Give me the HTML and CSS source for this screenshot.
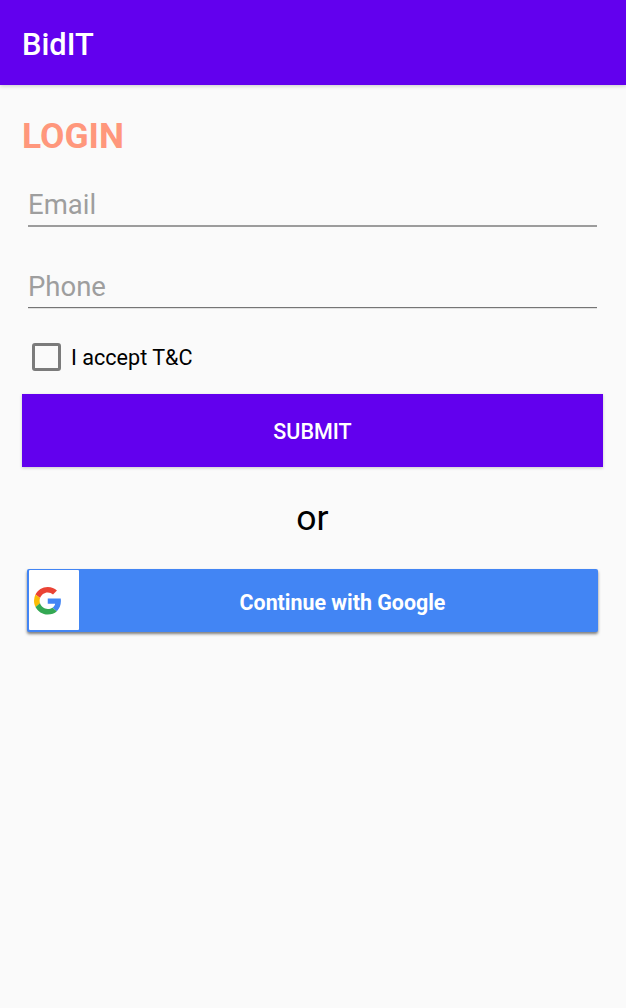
FILE: index.html
```html
<!DOCTYPE html>
<html lang="en">
<head>
<meta charset="utf-8">
<title>BidIT</title>
<link rel="stylesheet" href="styles.css">
</head>
<body>
<header class="app-bar"><h1 class="app-title">BidIT</h1></header>
<main class="login">
  <h2 class="heading">LOGIN</h2>
  <input class="field" type="email" placeholder="Email" aria-label="Email">
  <input class="field field-phone" type="tel" placeholder="Phone" aria-label="Phone">
  <label class="terms"><input class="checkbox" type="checkbox"><span class="terms-text">I accept T&amp;C</span></label>
  <button class="submit"><span class="submit-text">SUBMIT</span></button>
  <p class="or"><span class="or-text">or</span></p>
  <button class="google">
    <span class="google-icon">
      <svg width="27.5" height="27.5" viewBox="0 0 48 48"><path fill="#ea4335" d="M24 9.5c3.54 0 6.71 1.22 9.21 3.6l6.85-6.85C35.9 2.38 30.47 0 24 0 14.62 0 6.51 5.38 2.56 13.22l7.98 6.19C12.43 13.72 17.74 9.5 24 9.5z"/><path fill="#4285f4" d="M46.98 24.55c0-1.57-.15-3.09-.38-4.55H24v9.02h12.94c-.58 2.96-2.26 5.48-4.78 7.18l7.73 6c4.51-4.18 7.09-10.36 7.09-17.65z"/><path fill="#fbbc05" d="M10.53 28.59A14.5 14.5 0 0 1 9.77 24c0-1.6.27-3.14.76-4.59l-7.98-6.19A23.9 23.9 0 0 0 0 24c0 3.88.92 7.54 2.56 10.78l7.97-6.19z"/><path fill="#34a853" d="M24 48c6.48 0 11.93-2.13 15.89-5.81l-7.73-6c-2.15 1.45-4.92 2.3-8.16 2.3-6.26 0-11.57-4.22-13.47-9.91l-7.98 6.19C6.51 42.62 14.62 48 24 48z"/></svg>
    </span>
    <span class="google-label"><span class="google-text">Continue with Google</span></span>
  </button>
</main>
</body>
</html>
```
FILE: styles.css
```css
* { box-sizing: border-box; }
body { margin: 0; min-height: 1008px; background: #fafafa; font-family: Roboto, sans-serif; color: #000; }
button, input { font-family: inherit; }
button { border: 0; padding: 0; }
.app-bar { height: 85px; display: flex; align-items: center; padding: 5px 22px 0; background: #6200ee; box-shadow: 0 1px 4px rgba(0,0,0,.2); }
.app-title { margin: 0; font-size: 30.8px; font-weight: 500; line-height: 36px; color: #fff; }
.login { display: flex; flex-direction: column; padding: 31px 23px 0 22px; }
.heading { margin: 0; height: 41px; font-size: 35.4px; font-weight: 700; line-height: 41px; color: #ff977c; }
.field { height: 43px; margin: 27px 6px 0; border: 0; border-bottom: 2px solid #9c9c9c; border-radius: 0; padding: 0; outline: 0; background: none; font-size: 27.5px; }
.field::placeholder { color: #9e9e9e; opacity: 1; }
.field-phone { margin-top: 38px; border-bottom: 1px solid #757575; box-shadow: 0 -1px 0 #fafafa, 0 1px 0 #e0e0e0; }
.terms { display: flex; align-items: center; height: 28px; margin: 35px 0 0 10px; gap: 10px; }
.checkbox { appearance: none; width: 29px; height: 28px; margin: 0; border: 3px solid #7b7b7b; border-radius: 3px; }
.terms-text { font-size: 21.6px; }
.submit { height: 73px; margin-top: 23px; padding-top: 2px; background: #6200ee; color: #fff; font-size: 21.5px; font-weight: 500; box-shadow: 0 1px 3px rgba(0,0,0,.2); }
.or { margin: 30px 0 0; height: 42px; text-align: center; font-size: 35.5px; line-height: 42px; }
.google { display: flex; height: 63px; margin: 30px 5px 0; padding: 1px 2px 2px; border-radius: 2px; background: #4285f4; color: #fff; box-shadow: 0 2px 3px rgba(0,0,0,.5); }
.google-icon { display: flex; align-items: center; width: 50px; height: 60px; padding: 2px 0 0 5px; background: #fff; border-radius: 1px; }
.google-label { flex: 1; align-self: center; padding: 5px 0 0 10px; font-size: 21.4px; font-weight: 700; }
```
